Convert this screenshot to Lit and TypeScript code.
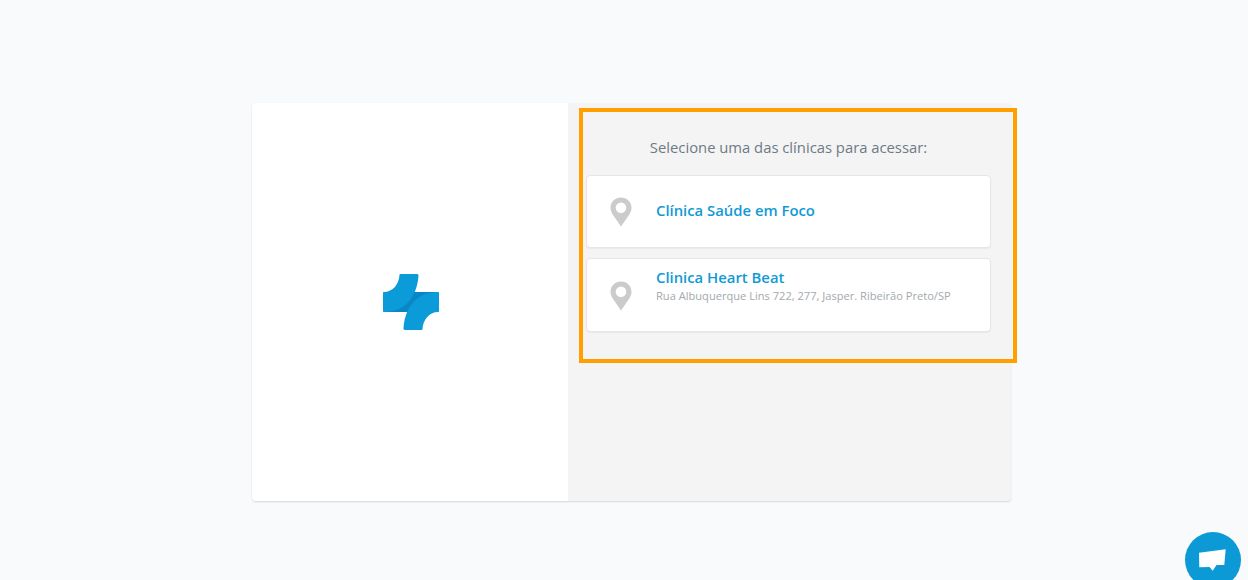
import { LitElement, html, css } from "lit";
import { customElement } from "lit/decorators.js";

const pin = html`<svg class="pin" width="22" height="30" viewBox="0 0 22 30"><path fill="#cbcbcb" fill-rule="evenodd" d="M11 .5C5 .5.5 5 .5 10.800c0 2.600 1 4.800 2.200 6.700L11 29.500l8.300-12c1.200-1.900 2.200-4.100 2.200-6.700C21.500 5 17 .5 11 .5zM11 5.500a5.300 5.300 0 1 1 0 10.600a5.300 5.300 0 0 1 0-10.600z"/></svg>`;

@customElement("app-root")
export class AppRoot extends LitElement {
  static styles = css`
    :host { display: block; height: 580px; background: #f9fafc; font-family: "Open Sans", sans-serif; overflow: hidden; position: relative; }
    .page { padding: 103px 0 0 252px; }
    .card { width: 759px; height: 398px; display: flex; background: #f4f4f4; border-radius: 4px; box-shadow: 0 1px 2px rgba(0,0,0,.14); overflow: hidden; box-sizing: border-box; }
    .left { width: 316px; background: #fff; display: flex; align-items: center; justify-content: center; }
    .left svg { display: block; margin-left: 1px; }
    .right { flex: 1; padding: 33px 20px 0 18px; display: flex; flex-direction: column; }
    .title { font-size: 14.8px; line-height: 22px; color: #6d7a84; text-align: center; margin: 0 0 17px; font-weight: 400; }
    .list { display: flex; flex-direction: column; gap: 10px; }
    .item { height: 73px; box-sizing: border-box; background: #fff; border: 1px solid #e6e6e6; border-radius: 4px; box-shadow: 0 1px 1px rgba(0,0,0,.05); display: flex; align-items: center; padding-left: 23px; }
    .item.tall { height: 74px; }
    .item.tall .pin { margin-top: 1px; }
    .pin { flex: none; margin-right: 24px; }
    .text { display: flex; flex-direction: column; padding-bottom: 3px; }
    .item.tall .text { align-self: flex-start; padding: 8px 0 0; }
    .name { font-size: 14.85px; line-height: 20px; font-weight: 600; color: #0f9ad6; }
    .addr { font-size: 11.1px; line-height: 17px; color: #a3a9ad; }
    .highlight { position: absolute; left: 579px; top: 108px; width: 438px; height: 255px; box-sizing: border-box; border: 4px solid #ffa000; pointer-events: none; }
    .chat { position: absolute; left: 1185px; top: 532px; width: 56px; height: 56px; border-radius: 50%; background: #0c9ad6; display: flex; align-items: center; justify-content: center; }
    .chat svg { margin-top: -4px; }
  `;

  render() {
    return html`
      <div class="page">
        <div class="card">
          <div class="left">
            <svg width="56" height="56" viewBox="0 0 56 56">
              <path fill="#0b86c4" d="M1 18H55V38H1z"/>
              <path fill="#0a9bd8" d="M17.500 0H34c1 0 1.800.8 1.500 2C33.500 25 21 37.500 2 38H1c-.6 0-1-.4-1-1V19c0-.6.4-1 1-1C10 18 16 10 16.500 1c0-.6.4-1 1-1z"/>
              <path fill="#0a9bd8" d="M38.500 56H22c-1 0-1.800-.8-1.500-2C22.500 31 35 18.500 54 18h1c.6 0 1 .4 1 1V37c0 .6-.4 1-1 1C46 38 40 46 39.500 55c0 .6-.4 1-1 1z"/>
            </svg>
          </div>
          <div class="right">
            <h1 class="title">Selecione uma das clínicas para acessar:</h1>
            <div class="list">
              <div class="item">${pin}<div class="text"><span class="name">Clínica Saúde em Foco</span></div></div>
              <div class="item tall">${pin}<div class="text"><span class="name">Clinica Heart Beat</span><span class="addr">Rua Albuquerque Lins 722, 277, Jasper. Ribeirão Preto/SP</span></div></div>
            </div>
          </div>
        </div>
      </div>
      <div class="highlight"></div>
      <div class="chat">
        <svg width="30" height="26" viewBox="0 0 30 26"><path fill="#fff" d="M1 7.700L27.700 4.300L26.300 20H18.500L14.700 25.700L11.500 22L1.300 22.300z"/></svg>
      </div>
    `;
  }
}
